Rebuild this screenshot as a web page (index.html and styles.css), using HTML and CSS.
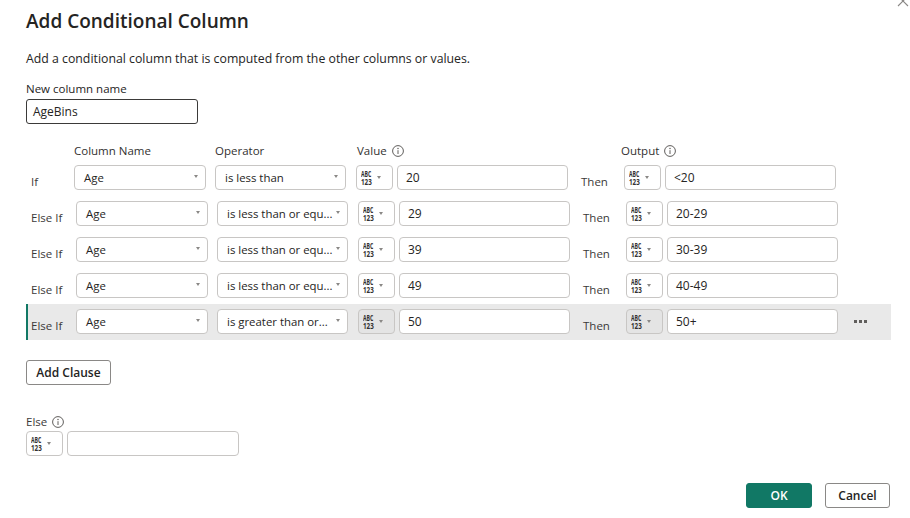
FILE: index.html
```html
<!DOCTYPE html>
<html lang="en">
<head>
<meta charset="utf-8">
<title>Add Conditional Column</title>
<link rel="stylesheet" href="styles.css">
</head>
<body>
<div class="dialog">
  <svg class="close" width="12" height="12" viewBox="0 0 12 12"><path d="M1 1L11 11M11 1L1 11" stroke="#8a8886" stroke-width="1.1" fill="none"/></svg>
  <h1 class="title">Add Conditional Column</h1>
  <p class="subtitle">Add a conditional column that is computed from the other columns or values.</p>
  <div class="field-label">New column name</div>
  <div class="name-input">AgeBins</div>

  <div class="clauses">
    <div class="head">
      <span class="h-label"></span>
      <span class="h-col">Column Name</span>
      <span class="h-op">Operator</span>
      <span class="h-val">Value <svg class="info" width="12" height="12" viewBox="0 0 12 12"><circle cx="6" cy="6" r="5.4" stroke="#605e5c" fill="none"/><circle cx="6" cy="3.6" r="0.75" fill="#605e5c"/><path d="M6 5.2V9" stroke="#605e5c" stroke-width="1"/></svg></span>
      <span class="h-out">Output <svg class="info" width="12" height="12" viewBox="0 0 12 12"><circle cx="6" cy="6" r="5.4" stroke="#605e5c" fill="none"/><circle cx="6" cy="3.6" r="0.75" fill="#605e5c"/><path d="M6 5.2V9" stroke="#605e5c" stroke-width="1"/></svg></span>
    </div>

    <div class="row row-if">
      <span class="row-label">If</span>
      <div class="select col-select">Age</div>
      <div class="select op-select">is less than</div>
      <div class="type-btn"><span class="type-txt"><span class="abc">ABC</span><span class="num">123</span></span></div>
      <div class="text-input val-input">20</div>
      <span class="then">Then</span>
      <div class="type-btn"><span class="type-txt"><span class="abc">ABC</span><span class="num">123</span></span></div>
      <div class="text-input out-input">&lt;20</div>
    </div>

    <div class="row">
      <span class="row-label">Else If</span>
      <div class="select col-select">Age</div>
      <div class="select op-select">is less than or equ...</div>
      <div class="type-btn"><span class="type-txt"><span class="abc">ABC</span><span class="num">123</span></span></div>
      <div class="text-input val-input">29</div>
      <span class="then">Then</span>
      <div class="type-btn"><span class="type-txt"><span class="abc">ABC</span><span class="num">123</span></span></div>
      <div class="text-input out-input">20-29</div>
    </div>

    <div class="row">
      <span class="row-label">Else If</span>
      <div class="select col-select">Age</div>
      <div class="select op-select">is less than or equ...</div>
      <div class="type-btn"><span class="type-txt"><span class="abc">ABC</span><span class="num">123</span></span></div>
      <div class="text-input val-input">39</div>
      <span class="then">Then</span>
      <div class="type-btn"><span class="type-txt"><span class="abc">ABC</span><span class="num">123</span></span></div>
      <div class="text-input out-input">30-39</div>
    </div>

    <div class="row">
      <span class="row-label">Else If</span>
      <div class="select col-select">Age</div>
      <div class="select op-select">is less than or equ...</div>
      <div class="type-btn"><span class="type-txt"><span class="abc">ABC</span><span class="num">123</span></span></div>
      <div class="text-input val-input">49</div>
      <span class="then">Then</span>
      <div class="type-btn"><span class="type-txt"><span class="abc">ABC</span><span class="num">123</span></span></div>
      <div class="text-input out-input">40-49</div>
    </div>

    <div class="row row-active">
      <span class="row-label">Else If</span>
      <div class="select col-select">Age</div>
      <div class="select op-select">is greater than or...</div>
      <div class="type-btn"><span class="type-txt"><span class="abc">ABC</span><span class="num">123</span></span></div>
      <div class="text-input val-input">50</div>
      <span class="then">Then</span>
      <div class="type-btn"><span class="type-txt"><span class="abc">ABC</span><span class="num">123</span></span></div>
      <div class="text-input out-input">50+</div>
      <span class="more"><i></i><i></i><i></i></span>
    </div>
  </div>

  <button class="btn add-btn">Add Clause</button>

  <div class="else-label">Else <svg class="info" width="12" height="12" viewBox="0 0 12 12"><circle cx="6" cy="6" r="5.4" stroke="#605e5c" fill="none"/><circle cx="6" cy="3.6" r="0.75" fill="#605e5c"/><path d="M6 5.2V9" stroke="#605e5c" stroke-width="1"/></svg></div>
  <div class="else-row">
    <div class="type-btn"><span class="type-txt"><span class="abc">ABC</span><span class="num">123</span></span></div>
    <div class="text-input else-input"></div>
  </div>

  <div class="footer">
    <button class="btn ok-btn">OK</button>
    <button class="btn cancel-btn">Cancel</button>
  </div>
</div>
</body>
</html>
```
FILE: styles.css
```css
* { box-sizing: border-box; }
html, body { margin: 0; padding: 0; background: #ffffff; }
body {
  font-family: "Open Sans", "Noto Sans", "DejaVu Sans", sans-serif;
  color: #252423;
  width: 910px;
  height: 518px;
  overflow: hidden;
}
.dialog {
  position: relative;
  padding: 0 19px 0 26px;
}
.close {
  position: absolute;
  top: -5px;
  left: 897px;
}
.title {
  margin: 0;
  padding-top: 9px;
  font-size: 19px;
  font-weight: 600;
  line-height: 24px;
  height: 33px;
  color: #252423;
}
.subtitle {
  margin: 18px 0 0;
  font-size: 12.3px;
  line-height: 16px;
  color: #252423;
}
.field-label {
  margin-top: 14px;
  font-size: 11.5px;
  line-height: 16px;
  color: #252423;
}
.name-input {
  margin-top: 2px;
  width: 172px;
  height: 25px;
  border: 1px solid #3b3a39;
  border-radius: 3px;
  padding: 0 6px;
  font-size: 12px;
  line-height: 23px;
}
.clauses { margin-top: 18px; }
.head {
  display: flex;
  height: 18px;
  padding-top: 1px;
  font-size: 11.5px;
  line-height: 16px;
  color: #323130;
  border-left: 2px solid transparent;
}
.head span { display: flex; align-items: center; height: 16px; }
.h-label { width: 46px; }
.h-col { width: 141px; }
.h-op { width: 140px; }
.h-val { width: 267px; padding-left: 2px; }
.h-out { margin-left: -1px; }
.info { margin-left: 5px; }

.row {
  display: flex;
  align-items: flex-start;
  height: 36px;
  padding-top: 5px;
  border-left: 2px solid transparent;
}
.row-active {
  background: #e9e9e9;
  border-left-color: #117865;
}
.row-label {
  width: 48px;
  padding-left: 3px;
  padding-top: 9px;
  font-size: 11.5px;
  line-height: 16px;
  color: #3b3a39;
}
.row-if .row-label { width: 46px; }

.select, .text-input, .type-btn {
  height: 25px;
  background: #ffffff;
  border: 1px solid #c8c6c4;
  border-radius: 4px;
  font-size: 12px;
  line-height: 23px;
  color: #252423;
  white-space: nowrap;
}
.select {
  position: relative;
  padding: 0 20px 0 9px;
  font-size: 11.4px;
  overflow: hidden;
}
.select::after, .type-btn::after {
  content: "";
  position: absolute;
  top: 9px;
  right: 7px;
  border-left: 2.5px solid transparent;
  border-right: 2.5px solid transparent;
  border-top: 3px solid #8a8886;
}
.col-select { width: 132px; }
.op-select { width: 131px; margin-left: 9px; }
.type-btn {
  position: relative;
  width: 37px;
  margin-left: 10px;
  padding-left: 4px;
}
.type-btn::after { right: 11px; top: 10px; }
.type-txt {
  display: flex;
  flex-direction: column;
  padding-top: 4px;
  font-weight: 700;
  color: #323130;
}
.abc, .num {
  display: block;
  transform-origin: left center;
}
.abc { font-size: 8px; line-height: 7.5px; transform: scaleX(0.64); }
.num { font-size: 9.5px; line-height: 8px; transform: scaleX(0.66); }
.text-input { padding-left: 8px; margin-left: 4px; }
.val-input { width: 171px; }
.then {
  width: 56px;
  padding-left: 13px;
  padding-top: 9px;
  font-size: 11.5px;
  line-height: 16px;
  color: #3b3a39;
}
.then + .type-btn { margin-left: 0; }
.out-input { width: 171px; }
.row-active .type-btn { background: #e4e4e4; }
.more {
  display: flex;
  gap: 2px;
  margin-left: 16px;
  padding-top: 11px;
}
.more i {
  display: block;
  width: 3px;
  height: 3px;
  background: #605e5c;
}

.btn {
  font-family: inherit;
  height: 25px;
  border-radius: 3px;
  font-size: 12px;
  font-weight: 600;
  line-height: 23px;
  padding: 0;
  cursor: pointer;
}
.add-btn {
  display: block;
  margin-top: 20px;
  width: 85px;
  background: #ffffff;
  border: 1px solid #8a8886;
  color: #252423;
}
.else-label {
  display: flex;
  align-items: center;
  margin-top: 29px;
  height: 16px;
  font-size: 11.5px;
  line-height: 16px;
  color: #3b3a39;
}
.else-row {
  display: flex;
  margin-top: 1px;
}
.else-row .type-btn { margin-left: 0; }
.else-input { width: 172px; }
.footer {
  display: flex;
  justify-content: flex-end;
  gap: 13px;
  margin-top: 27px;
  padding-right: 1px;
}
.ok-btn {
  width: 66px;
  background: #117865;
  border: 1px solid #117865;
  color: #ffffff;
}
.cancel-btn {
  width: 65px;
  background: #ffffff;
  border: 1px solid #8a8886;
  color: #252423;
}
```
